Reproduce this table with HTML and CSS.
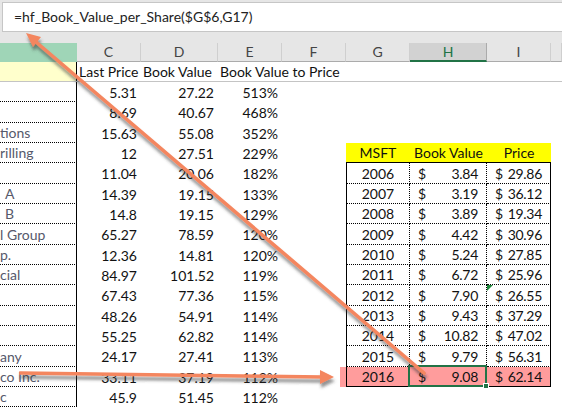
FILE: index.html
```html
<!DOCTYPE html>
<html>
<head>
<meta charset="utf-8">
<link rel="stylesheet" href="styles.css">
</head>
<body>
<div class="app">
  <div class="top">
    <div class="formula">=hf_Book_Value_per_Share($G$6,G17)</div>
  </div>
  <div class="heads">
    <div class="hd hd-range"></div>
    <div class="hd">C</div>
    <div class="hd">D</div>
    <div class="hd">E</div>
    <div class="hd">F</div>
    <div class="hd">G</div>
    <div class="hd hd-active">H</div>
    <div class="hd">I</div>
    <div class="hd"></div>
  </div>
  <div class="sheet">
    <div class="row h20 titles">
      <div class="c nm pale"></div>
      <div class="c lbl">Last Price</div>
      <div class="c lbl">Book Value</div>
      <div class="c lbl">Book Value to Price</div>
      <div class="c"></div><div class="c"></div><div class="c"></div><div class="c"></div><div class="c"></div>
    </div>

    <div class="row h20">
      <div class="c nm"></div><div class="c n">5.31</div><div class="c n">27.22</div><div class="c n">513%</div>
      <div class="c"></div><div class="c"></div><div class="c"></div><div class="c"></div><div class="c"></div>
    </div>
    <div class="row h21">
      <div class="c nm"></div><div class="c n">8.69</div><div class="c n">40.67</div><div class="c n">468%</div>
      <div class="c"></div><div class="c"></div><div class="c"></div><div class="c"></div><div class="c"></div>
    </div>
    <div class="row h20">
      <div class="c nm">tions</div><div class="c n">15.63</div><div class="c n">55.08</div><div class="c n">352%</div>
      <div class="c"></div><div class="c"></div><div class="c"></div><div class="c"></div><div class="c"></div>
    </div>
    <div class="row h20">
      <div class="c nm">rilling</div><div class="c n">12</div><div class="c n">27.51</div><div class="c n">229%</div>
      <div class="c"></div>
      <div class="c th">MSFT</div><div class="c th">Book Value</div><div class="c th">Price</div>
      <div class="c"></div>
    </div>

    <div class="row h21">
      <div class="c nm"></div><div class="c n">11.04</div><div class="c n">20.06</div><div class="c n">182%</div>
      <div class="c"></div>
      <div class="c yr">2006</div><div class="c acc bv"><span>$</span><span class="v">3.84</span></div><div class="c acc pr"><span>$</span><span class="v">29.86</span></div>
      <div class="c"></div>
    </div>
    <div class="row h20">
      <div class="c nm ind">A</div><div class="c n">14.39</div><div class="c n">19.15</div><div class="c n">133%</div>
      <div class="c"></div>
      <div class="c yr">2007</div><div class="c acc bv"><span>$</span><span class="v">3.19</span></div><div class="c acc pr"><span>$</span><span class="v">36.12</span></div>
      <div class="c"></div>
    </div>
    <div class="row h20">
      <div class="c nm ind">B</div><div class="c n">14.8</div><div class="c n">19.15</div><div class="c n">129%</div>
      <div class="c"></div>
      <div class="c yr">2008</div><div class="c acc bv"><span>$</span><span class="v">3.89</span></div><div class="c acc pr"><span>$</span><span class="v">19.34</span></div>
      <div class="c"></div>
    </div>
    <div class="row h21">
      <div class="c nm">l Group</div><div class="c n">65.27</div><div class="c n">78.59</div><div class="c n">120%</div>
      <div class="c"></div>
      <div class="c yr">2009</div><div class="c acc bv"><span>$</span><span class="v">4.42</span></div><div class="c acc pr"><span>$</span><span class="v">30.96</span></div>
      <div class="c"></div>
    </div>
    <div class="row h20">
      <div class="c nm">p.</div><div class="c n">12.36</div><div class="c n">14.81</div><div class="c n">120%</div>
      <div class="c"></div>
      <div class="c yr">2010</div><div class="c acc bv"><span>$</span><span class="v">5.24</span></div><div class="c acc pr"><span>$</span><span class="v">27.85</span></div>
      <div class="c"></div>
    </div>
    <div class="row h20">
      <div class="c nm">cial</div><div class="c n">84.97</div><div class="c n">101.52</div><div class="c n">119%</div>
      <div class="c"></div>
      <div class="c yr">2011</div><div class="c acc bv"><span>$</span><span class="v">6.72</span></div><div class="c acc pr"><span>$</span><span class="v">25.96</span></div>
      <div class="c"></div>
    </div>
    <div class="row h21">
      <div class="c nm"></div><div class="c n">67.43</div><div class="c n">77.36</div><div class="c n">115%</div>
      <div class="c"></div>
      <div class="c yr">2012</div><div class="c acc bv"><span>$</span><span class="v">7.90</span></div><div class="c acc pr flag"><span>$</span><span class="v">26.55</span></div>
      <div class="c"></div>
    </div>
    <div class="row h20">
      <div class="c nm"></div><div class="c n">48.26</div><div class="c n">54.91</div><div class="c n">114%</div>
      <div class="c"></div>
      <div class="c yr">2013</div><div class="c acc bv"><span>$</span><span class="v">9.43</span></div><div class="c acc pr"><span>$</span><span class="v">37.29</span></div>
      <div class="c"></div>
    </div>
    <div class="row h20">
      <div class="c nm"></div><div class="c n">55.25</div><div class="c n">62.82</div><div class="c n">114%</div>
      <div class="c"></div>
      <div class="c yr">2014</div><div class="c acc bv"><span>$</span><span class="v">10.82</span></div><div class="c acc pr"><span>$</span><span class="v">47.02</span></div>
      <div class="c"></div>
    </div>
    <div class="row h21">
      <div class="c nm">any</div><div class="c n">24.17</div><div class="c n">27.41</div><div class="c n">113%</div>
      <div class="c"></div>
      <div class="c yr">2015</div><div class="c acc bv"><span>$</span><span class="v">9.79</span></div><div class="c acc pr"><span>$</span><span class="v">56.31</span></div>
      <div class="c"></div>
    </div>
    <div class="row h20 hl">
      <div class="c nm">co Inc.</div><div class="c n">33.11</div><div class="c n">37.19</div><div class="c n">112%</div>
      <div class="c pink-edge"></div>
      <div class="c yr last">2016</div><div class="c acc bv last sel"><span>$</span><span class="v">9.08</span><i class="selbox"></i><i class="handle"></i></div><div class="c acc pr last"><span>$</span><span class="v">62.14</span></div>
      <div class="c"></div>
    </div>
    <div class="row h20">
      <div class="c nm">c</div><div class="c n">45.9</div><div class="c n">51.45</div><div class="c n">112%</div>
      <div class="c"></div><div class="c"></div><div class="c"></div><div class="c"></div><div class="c"></div>
    </div>
    <div class="row h20">
      <div class="c nm"></div><div class="c n"></div><div class="c n"></div><div class="c n"></div>
      <div class="c"></div><div class="c"></div><div class="c"></div><div class="c"></div><div class="c"></div>
    </div>
  </div>

  <svg class="arrows" width="562" height="407" viewBox="0 0 562 407">
    <defs>
      <filter id="sh" x="-10%" y="-10%" width="120%" height="130%">
        <feDropShadow dx="1" dy="4" stdDeviation="1.6" flood-color="#3a3a3a" flood-opacity="0.55"/>
      </filter>
    </defs>
    <g filter="url(#sh)" fill="#f4865f" stroke="#f4865f">
      <line x1="424" y1="373" x2="36" y2="42" stroke-width="3.6" stroke-linecap="round"/>
      <polygon points="26,33 41,37 33,47" stroke="none"/>
      <line x1="21" y1="373" x2="321" y2="377" stroke-width="3.6" stroke-linecap="square"/>
      <polygon points="334,377 320,370 320,384" stroke="none"/>
    </g>
  </svg>
</div>
</body>
</html>
```

FILE: styles.css
```css
* { box-sizing: border-box; }
html, body { margin: 0; padding: 0; background: #fff; }
body {
  width: 562px;
  height: 407px;
  overflow: hidden;
  font-family: Lato, "Open Sans", sans-serif;
  font-size: 14px;
  color: #111;
}
.app {
  position: relative;
  width: 562px;
  height: 407px;
  overflow: hidden;
}
.top {
  background: #e6e6e6;
  padding: 2px 0 11px 2px;
}
.formula {
  height: 30px;
  background: #fff;
  border: 1px solid #c6c6c6;
  border-right: none;
  padding-left: 11px;
  line-height: 28px;
  color: #222;
  white-space: nowrap;
}
.heads, .row {
  display: grid;
  grid-template-columns: 77px 64px 77px 64px 64px 64px 77px 64px 1fr;
}
.heads {
  height: 19px;
  background: #e6e6e6;
}
.hd {
  height: 19px;
  line-height: 18px;
  text-align: center;
  color: #444;
  border-right: 1px solid #cfcfcf;
  border-bottom: 1px solid #ababab;
}
.hd-range {
  background: #9fd5b7;
  border-right-color: #9fd5b7;
  border-bottom-color: #9fd5b7;
}
.hd-active {
  background: #d2d2d2;
  color: #217346;
  border-bottom: 2px solid #217346;
  border-right-color: #ababab;
}
.row { height: 20px; }
.h20 { height: 20px; }
.h21 { height: 21px; }
.c {
  white-space: nowrap;
  overflow: visible;
  display: flex;
  align-items: center;
  min-width: 0;
}
.titles { border-bottom: 1px solid #c4c4c4; }
.pale { background: #ffffcc; }
.nm {
  border-right: 1px solid #000;
  border-bottom: 1px dotted #000;
  color: #56596b;
  overflow: hidden;
  padding-left: 0;
}
.titles .nm { border-bottom: none; }
.ind { padding-left: 5px; }
.lbl { padding-left: 2px; }
.n {
  justify-content: flex-end;
  padding-right: 4px;
}
.th {
  background: #ffff00;
  justify-content: center;
  border-bottom: 1px solid #000;
}
.yr {
  justify-content: center;
  border-left: 1px solid #000;
  border-right: 1px dotted #000;
  border-bottom: 1px dotted #000;
}
.acc {
  justify-content: space-between;
  padding: 0 8px 0 8px;
  border-bottom: 1px dotted #000;
}
.v { letter-spacing: -0.3px; }
.bv { border-right: 1px dotted #000; }
.pr { border-right: 1px solid #000; }
.c.last { border-bottom: 1px solid #000; background: #ff9c9c; }
.pink-edge { background: linear-gradient(to right, transparent 58px, #ff9c9c 58px); }
.sel { position: relative; }
.selbox {
  position: absolute;
  left: -2px;
  top: -2px;
  right: -1px;
  bottom: -1px;
  border: 2px solid #217346;
}
.handle {
  position: absolute;
  right: -3px;
  bottom: -3px;
  width: 6px;
  height: 6px;
  background: #217346;
  border: 1px solid #fff;
}
.flag { position: relative; }
.flag::before {
  content: "";
  position: absolute;
  left: 0;
  top: 0;
  border-top: 6px solid #1e8a3c;
  border-right: 6px solid transparent;
}
.arrows {
  position: absolute;
  left: 0;
  top: 0;
  pointer-events: none;
}
```
